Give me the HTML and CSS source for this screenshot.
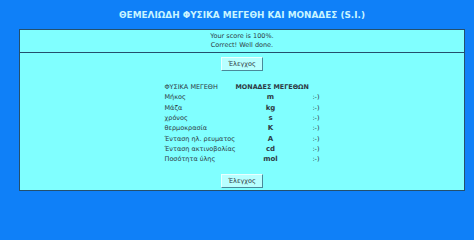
FILE: index.html
```html
<!DOCTYPE html>
<html lang="el">
<head>
<meta charset="utf-8">
<title>Φυσικά μεγέθη</title>
<link rel="stylesheet" href="styles.css">
</head>
<body>
<h1 class="title">ΘΕΜΕΛΙΩΔΗ ΦΥΣΙΚΑ ΜΕΓΕΘΗ ΚΑΙ ΜΟΝΑΔΕΣ (S.I.)</h1>
<div class="box">
  <div class="feedback">
    <div>Your score is 100%.</div>
    <div>Correct! Well done.</div>
  </div>
  <div class="quiz">
    <button class="btn">Έλεγχος</button>
    <div class="grid">
      <div class="c1">ΦΥΣΙΚΑ ΜΕΓΕΘΗ</div><div class="c2 head">ΜΟΝΑΔΕΣ ΜΕΓΕΘΩΝ</div><div class="c3"></div>
      <div class="c1">Μήκος</div><div class="c2">m</div><div class="c3">:-)</div>
      <div class="c1">Μάζα</div><div class="c2">kg</div><div class="c3">:-)</div>
      <div class="c1">χρόνος</div><div class="c2">s</div><div class="c3">:-)</div>
      <div class="c1">θερμοκρασία</div><div class="c2">K</div><div class="c3">:-)</div>
      <div class="c1">Ένταση ηλ. ρευματος</div><div class="c2">A</div><div class="c3">:-)</div>
      <div class="c1">Ένταση ακτινοβολίας</div><div class="c2">cd</div><div class="c3">:-)</div>
      <div class="c1">Ποσότητα ύλης</div><div class="c2">mol</div><div class="c3">:-)</div>
    </div>
    <button class="btn">Έλεγχος</button>
  </div>
</div>
</body>
</html>
```
FILE: styles.css
```css
html, body {
  margin: 0;
  padding: 0;
}
body {
  background: #0f80f8;
  font-family: "DejaVu Sans", Verdana, sans-serif;
  color: #2e3a44;
  width: 474px;
  height: 206px;
  overflow: hidden;
}
.title {
  margin: 0 0 0 19px;
  width: 446px;
  height: 29px;
  line-height: 30px;
  text-align: center;
  font-size: 8.9px;
  font-weight: bold;
  color: #c8f4ff;
  white-space: nowrap;
}
.box {
  margin-left: 19px;
  width: 444px;
  border: 1px solid #23506e;
  background: #80ffff;
}
.feedback {
  height: 23px;
  padding-top: 2px;
  box-sizing: border-box;
  text-align: center;
  font-size: 6.5px;
  line-height: 9px;
  border-bottom: 1px solid #23506e;
}
.quiz {
  display: flex;
  flex-direction: column;
  align-items: center;
  padding: 4px 0 2px;
}
.btn {
  width: 42px;
  height: 14px;
  padding: 0;
  margin: 0;
  font-family: "DejaVu Sans", Verdana, sans-serif;
  font-size: 6.5px;
  color: #2e3a44;
  background: #b8ffff;
  border: 1px solid;
  border-color: #e8ffff #4a8a9a #4a8a9a #e8ffff;
}
.grid {
  display: grid;
  grid-template-columns: 71px 70px 14px;
  grid-auto-rows: 10.3px;
  align-items: center;
  margin: 11px 0 10px;
  font-size: 6.5px;
  line-height: 10px;
}
.c1 {
  white-space: nowrap;
}
.c2 {
  text-align: center;
  font-weight: bold;
  font-size: 7px;
  white-space: nowrap;
}
.c2.head {
  font-size: 6.4px;
}
.c3 {
  text-align: right;
}
```
